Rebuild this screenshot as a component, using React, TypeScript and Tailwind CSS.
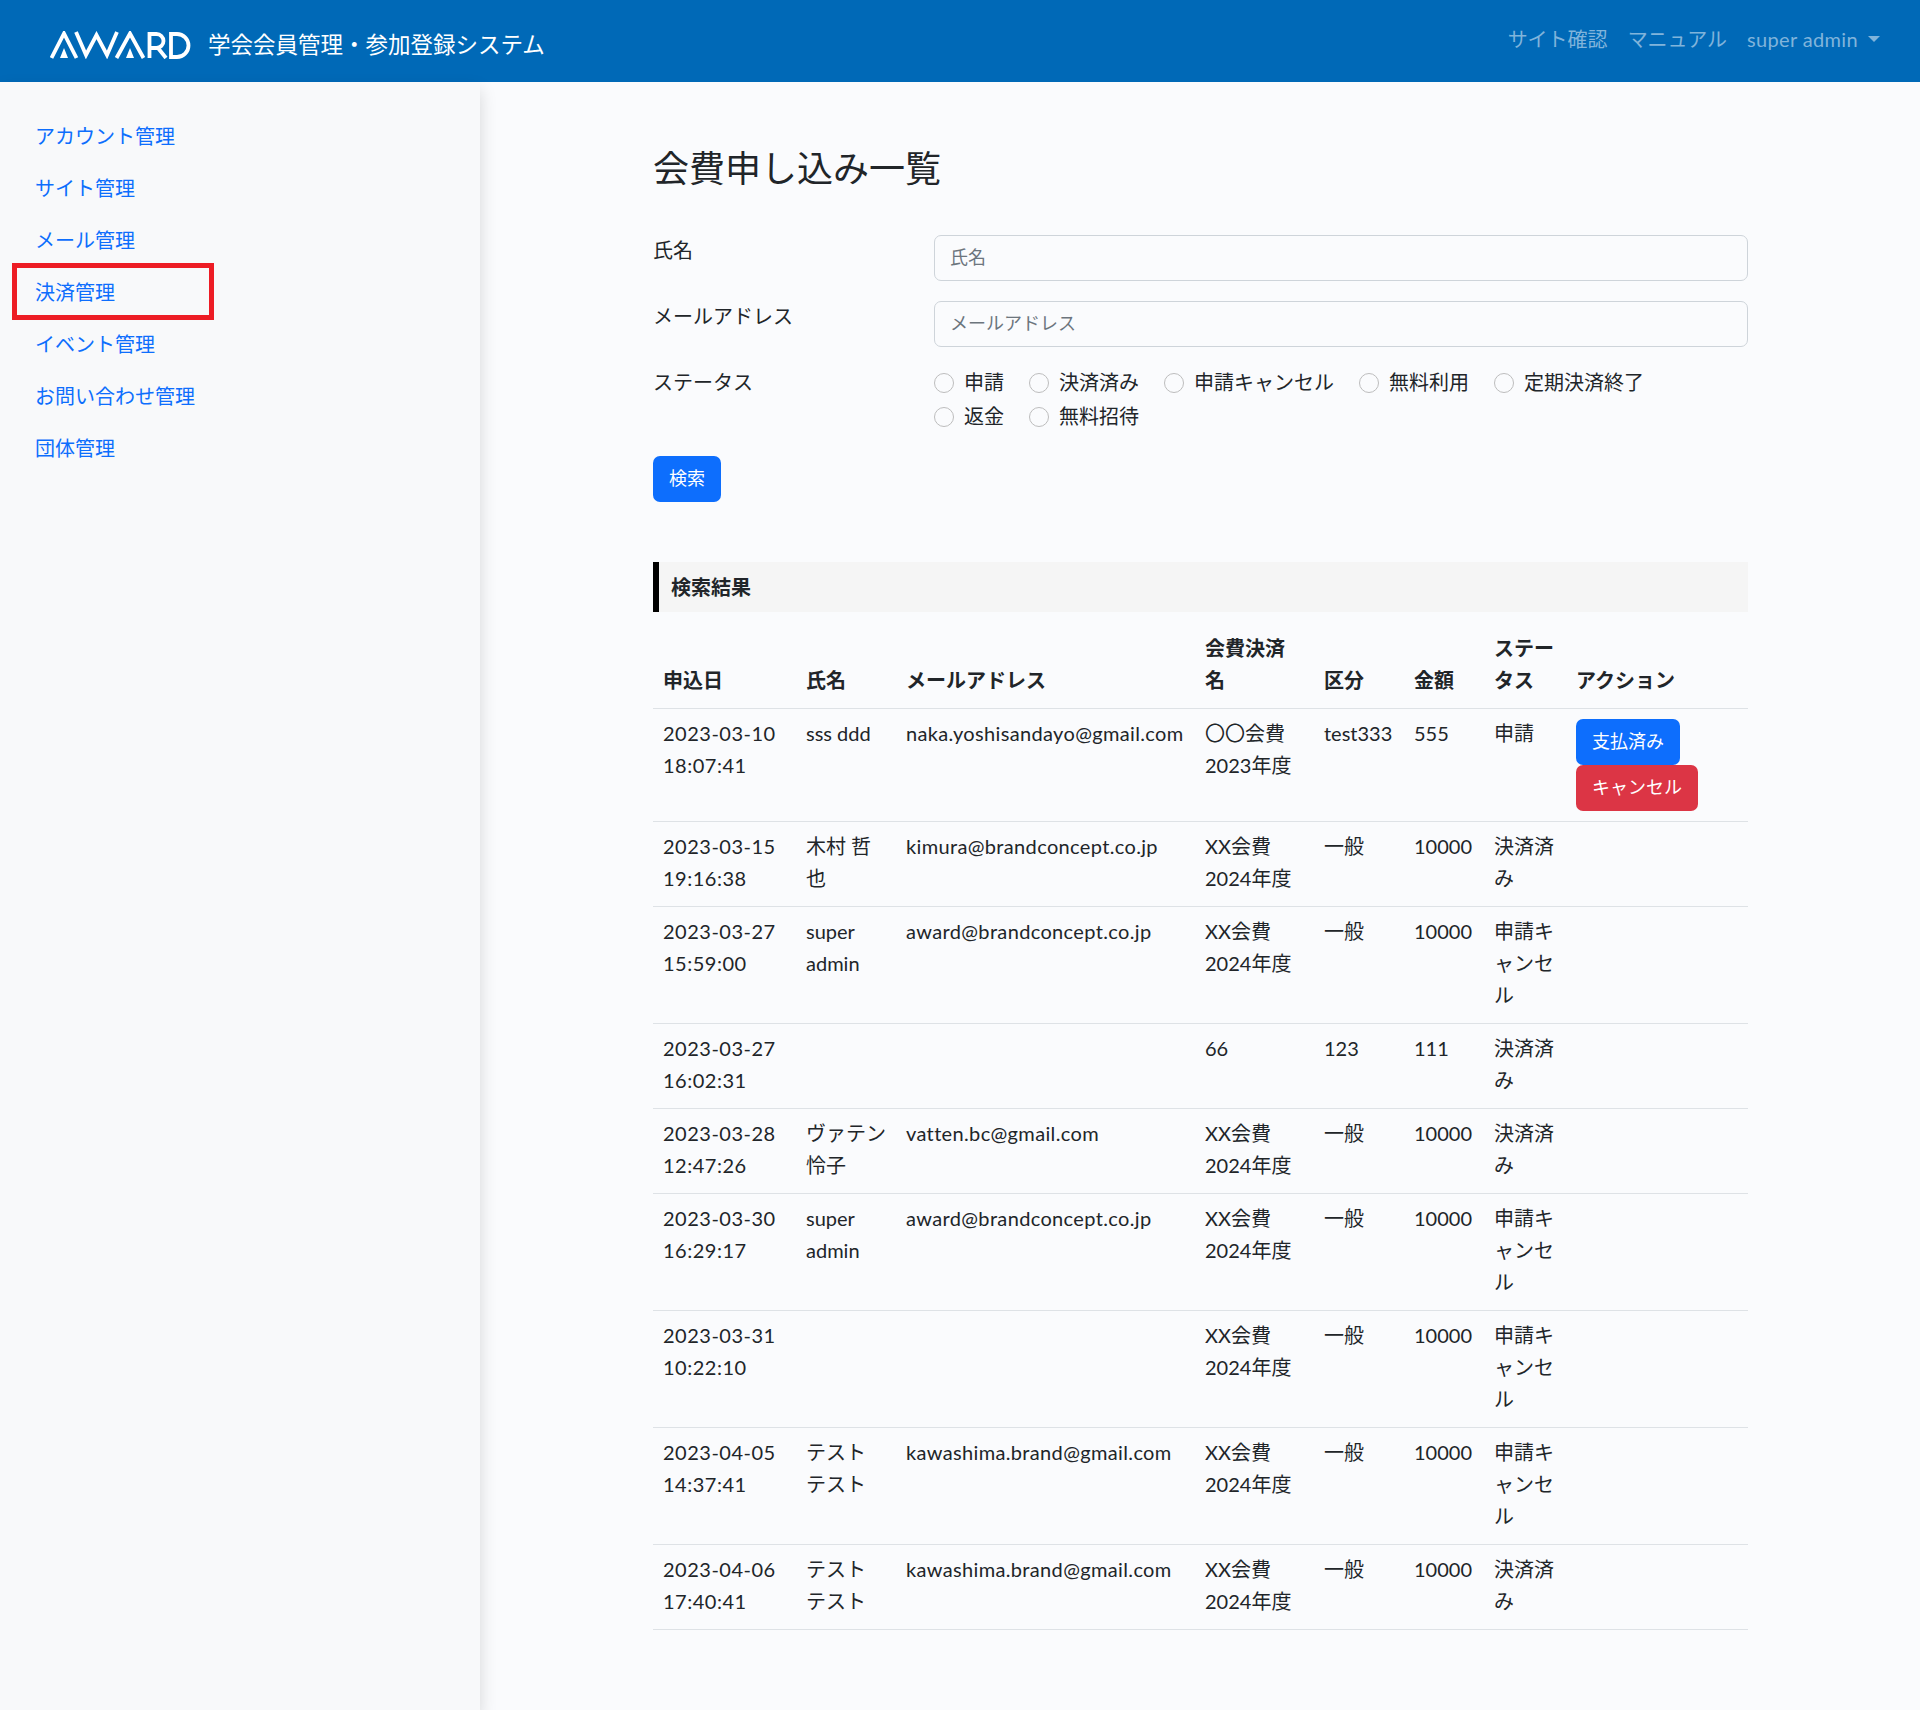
import { ChangeEvent } from "react";

interface Row {
  date: string;
  time: string;
  name: string;
  email: string;
  fee: string;
  feeYear: string;
  kind: string;
  amount: string;
  status: string;
  actions?: boolean;
}

const NAV_ITEMS = [
  "アカウント管理",
  "サイト管理",
  "メール管理",
  "決済管理",
  "イベント管理",
  "お問い合わせ管理",
  "団体管理",
];

const STATUSES = ["申請", "決済済み", "申請キャンセル", "無料利用", "定期決済終了", "返金", "無料招待"];

const ROWS: Row[] = [
  { date: "2023-03-10", time: "18:07:41", name: "sss ddd", email: "naka.yoshisandayo@gmail.com", fee: "〇〇会費", feeYear: "2023年度", kind: "test333", amount: "555", status: "申請", actions: true },
  { date: "2023-03-15", time: "19:16:38", name: "木村 哲也", email: "kimura@brandconcept.co.jp", fee: "XX会費", feeYear: "2024年度", kind: "一般", amount: "10000", status: "決済済み" },
  { date: "2023-03-27", time: "15:59:00", name: "super admin", email: "award@brandconcept.co.jp", fee: "XX会費", feeYear: "2024年度", kind: "一般", amount: "10000", status: "申請キャンセル" },
  { date: "2023-03-27", time: "16:02:31", name: "", email: "", fee: "66", feeYear: "", kind: "123", amount: "111", status: "決済済み" },
  { date: "2023-03-28", time: "12:47:26", name: "ヴァテン 怜子", email: "vatten.bc@gmail.com", fee: "XX会費", feeYear: "2024年度", kind: "一般", amount: "10000", status: "決済済み" },
  { date: "2023-03-30", time: "16:29:17", name: "super admin", email: "award@brandconcept.co.jp", fee: "XX会費", feeYear: "2024年度", kind: "一般", amount: "10000", status: "申請キャンセル" },
  { date: "2023-03-31", time: "10:22:10", name: "", email: "", fee: "XX会費", feeYear: "2024年度", kind: "一般", amount: "10000", status: "申請キャンセル" },
  { date: "2023-04-05", time: "14:37:41", name: "テスト テスト", email: "kawashima.brand@gmail.com", fee: "XX会費", feeYear: "2024年度", kind: "一般", amount: "10000", status: "申請キャンセル" },
  { date: "2023-04-06", time: "17:40:41", name: "テスト テスト", email: "kawashima.brand@gmail.com", fee: "XX会費", feeYear: "2024年度", kind: "一般", amount: "10000", status: "決済済み" },
];

function AwardLogo() {
  return (
    <svg width="141" height="28" viewBox="0 0 141 28" fill="none" stroke="#fff" strokeWidth="3.800">
      <path d="M1.500 27 14 2.500 26.500 27" />
      <path d="M14 17 10 27h8z" fill="#fff" stroke="none" />
      <path d="M26 1l10 23 10.500-20L57 24 67 1" />
      <path d="M66.500 27 80 2.500 93.500 27" />
      <path d="M80 17 76 27h8z" fill="#fff" stroke="none" />
      <path d="M99.500 27V3h7a7 7 0 0 1 0 14h-7M108 17l8 10" />
      <path d="M121 3v23h6a11.500 11.500 0 0 0 0-23z" />
    </svg>
  );
}

function Field({ label, placeholder }: { label: string; placeholder: string }) {
  const ignore = (_: ChangeEvent<HTMLInputElement>) => {};
  return (
    <div className="mb-5 flex">
      <label className="w-[281px] shrink-0 leading-[30px]">{label}</label>
      <input
        placeholder={placeholder}
        onChange={ignore}
        className="h-[46px] flex-1 rounded-[7px] border border-[#ced4da] bg-transparent px-[15px] pb-[2px] text-[18px] placeholder:text-[#6c757d]"
      />
    </div>
  );
}

export default function App() {
  return (
    <div className="flex min-h-[1710px] flex-col bg-[#fafbfd] font-[Lato,'Noto_Sans_CJK_JP',sans-serif] text-[20px] leading-8 text-[#212529]">
      <header className="flex h-[82px] items-center justify-between bg-[#0069b7] pl-[50px] pr-[40px]">
        <div className="flex items-center gap-[17px] pt-[7px]">
          <AwardLogo />
          <span className="text-[22.5px] text-white">学会会員管理・参加登録システム</span>
        </div>
        <nav className="flex items-center gap-5 pb-[5px] text-[#80b4db]">
          <span>サイト確認</span>
          <span>マニュアル</span>
          <span className="flex items-center gap-[10px] tracking-[0.35px]">
            super admin
            <i className="h-0 w-0 border-x-[6px] border-t-[6px] border-x-transparent border-t-[#80b4db]" />
          </span>
        </nav>
      </header>

      <div className="flex flex-1">
        <aside className="relative w-[480px] shrink-0 bg-[#f8f9fa] pl-[35px] pt-7 shadow-[0_8px_16px_rgba(0,0,0,0.15)]">
          {NAV_ITEMS.map((item) => (
            <div key={item} className="py-[10px] text-[#0d6efd]">
              {item}
            </div>
          ))}
          <div className="absolute left-[12px] top-[181px] h-[57px] w-[202px] border-[5px] border-[#ed1c24]" />
        </aside>

        <main className="flex-1 pl-[173px] pr-[172px] pt-[65px]">
          <h1 className="mb-[45px] text-[36px] font-normal leading-[43px]">会費申し込み一覧</h1>
          <Field label="氏名" placeholder="氏名" />
          <Field label="メールアドレス" placeholder="メールアドレス" />
          <div className="mb-[23px] flex">
            <div className="w-[281px] shrink-0 leading-[30px]">ステータス</div>
            <div className="flex flex-1 flex-wrap gap-x-[25px] gap-y-[2px] pr-[60px]">
              {STATUSES.map((s) => (
                <label key={s} className="flex items-center gap-[10px]">
                  <input type="radio" name="status" className="h-5 w-5 appearance-none rounded-full border border-[#bdbdbd] bg-transparent" />
                  <span className="pb-[2px] leading-[30px]">{s}</span>
                </label>
              ))}
            </div>
          </div>
          <button className="h-[46px] rounded-[7px] bg-[#0d6efd] px-4 pb-[2px] text-[18px] text-white">検索</button>

          <div className="mt-[60px] flex h-[50px] items-center border-l-[6px] border-black bg-[#f5f5f5] pl-[12px] font-bold">
            検索結果
          </div>

          <table className="mt-[12px] w-full table-fixed border-collapse">
            <thead>
              <tr className="border-b border-[#dee2e6] text-left align-bottom">
                <th className="w-[143px] px-[10px] pb-[12px] pt-[8px]">申込日</th>
                <th className="w-[100px] px-[10px] pb-[12px] pt-[8px]">氏名</th>
                <th className="w-[299px] px-[10px] pb-[12px] pt-[8px]">メールアドレス</th>
                <th className="w-[119px] px-[10px] pb-[12px] pt-[8px]">会費決済名</th>
                <th className="w-[90px] px-[10px] pb-[12px] pt-[8px]">区分</th>
                <th className="w-[80px] px-[10px] pb-[12px] pt-[8px]">金額</th>
                <th className="w-[82px] px-[10px] pb-[12px] pt-[8px]">ステータス</th>
                <th className="px-[10px] pb-[12px] pt-[8px]">アクション</th>
              </tr>
            </thead>
            <tbody>
              {ROWS.map((r, i) => (
                <tr key={i} className="border-b border-[#dee2e6] align-top">
                  <td className="px-[10px] pb-[12px] pt-[8px] tracking-[0.5px]">
                    {r.date}
                    <br />
                    {r.time}
                  </td>
                  <td className="px-[10px] pb-[12px] pt-[8px]">{r.name}</td>
                  <td className="px-[10px] pb-[12px] pt-[8px] tracking-[0.35px]">{r.email}</td>
                  <td className="px-[10px] pb-[12px] pt-[8px]">
                    {r.fee}
                    {r.feeYear && <br />}
                    {r.feeYear}
                  </td>
                  <td className="px-[10px] pb-[12px] pt-[8px]">{r.kind}</td>
                  <td className="px-[10px] pb-[12px] pt-[8px]">{r.amount}</td>
                  <td className="px-[10px] pb-[12px] pt-[8px]">{r.status}</td>
                  <td className="p-[10px]">
                    {r.actions && (
                      <>
                        <button className="block h-[46px] rounded-[7px] bg-[#0d6efd] px-4 pb-[2px] text-[18px] text-white">支払済み</button>
                        <button className="block h-[46px] rounded-[7px] bg-[#dc3545] px-4 pb-[2px] text-[18px] text-white">キャンセル</button>
                      </>
                    )}
                  </td>
                </tr>
              ))}
            </tbody>
          </table>
        </main>
      </div>
    </div>
  );
}
